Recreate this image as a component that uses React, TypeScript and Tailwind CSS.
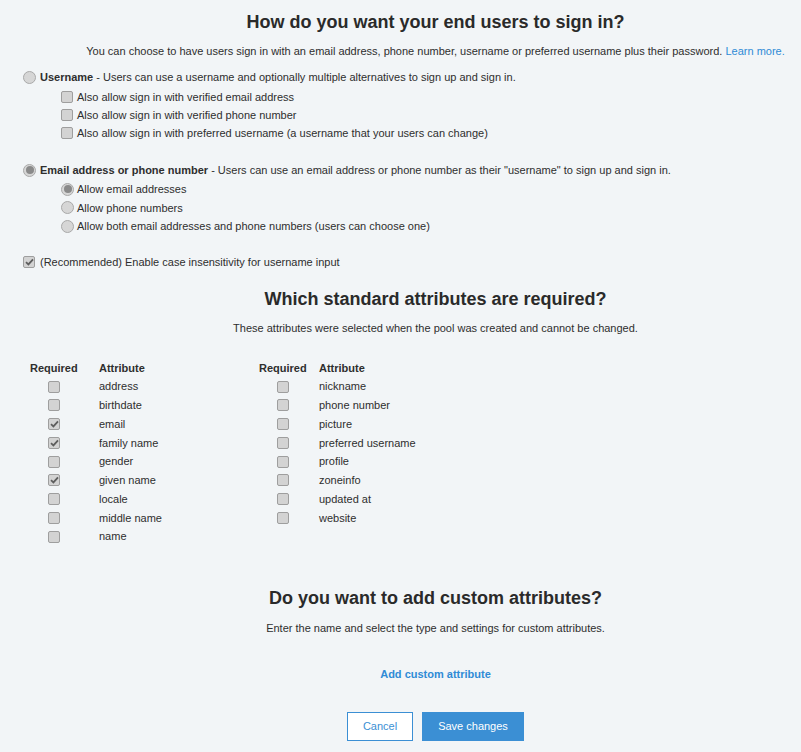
import React from "react"

const Radio = ({ checked = false }: { checked?: boolean }) => (
    <span className="w-[13px] h-[13px] rounded-full border border-[#a9a9a9] bg-[#d6d6d6] flex items-center justify-center shrink-0">
        {checked && <span className="w-[8px] h-[8px] rounded-full bg-[#8a8a8a]" />}
    </span>
)

const Check = ({ checked = false }: { checked?: boolean }) => (
    <span className="w-[12px] h-[12px] rounded-[2px] border border-[#9e9e9e] bg-[#d3d3d3] flex items-center justify-center shrink-0">
        {checked && (
            <svg width="9" height="8" viewBox="0 0 9 8">
                <path d="M1 4.2 L3.4 6.4 L8 1.3" fill="none" stroke="#5e5e5e" strokeWidth="1.8" />
            </svg>
        )}
    </span>
)

const left = [
    ["address", false],
    ["birthdate", false],
    ["email", true],
    ["family name", true],
    ["gender", false],
    ["given name", true],
    ["locale", false],
    ["middle name", false],
    ["name", false],
] as const

const right = [
    "nickname",
    "phone number",
    "picture",
    "preferred username",
    "profile",
    "zoneinfo",
    "updated at",
    "website",
]

const AttrTable = ({ rows, reqW, checkCls }: { rows: readonly (readonly [string, boolean])[]; reqW: string; checkCls: string }) => (
    <div className="flex flex-col">
        <div className="flex h-[18.75px] items-center font-bold">
            <div className={reqW}>Required</div>
            <div className="w-[160px]">Attribute</div>
        </div>
        {rows.map(([name, on]) => (
            <div key={name} className="flex h-[18.75px] items-center">
                <div className={`${reqW} ${checkCls} flex`}>
                    <Check checked={on} />
                </div>
                <div className="w-[160px]">{name}</div>
            </div>
        ))}
    </div>
)

export default function App() {
    return (
        <div className="min-h-[752px] w-[801px] bg-[#f2f5f7] text-[#2e2e2e] text-[11px] overflow-hidden" style={{ fontFamily: '"Liberation Sans", Arial, sans-serif' }}>
            <div className="pt-[10px] pl-[70px] text-center">
                <h1 className="text-[18px] leading-[24px] font-bold text-[#2a2a2a]">How do you want your end users to sign in?</h1>
                <p className="mt-[10px] leading-[14px]">
                    You can choose to have users sign in with an email address, phone number, username or preferred username plus their password.{" "}
                    <span className="text-[#2f8bd6]">Learn more.</span>
                </p>
            </div>

            <div className="pl-[23px]">
                <div className="mt-[10px] h-[18px] flex items-center gap-[4px]">
                    <Radio />
                    <span><b>Username</b> - Users can use a username and optionally multiple alternatives to sign up and sign in.</span>
                </div>
                <div className="mt-[2px] pl-[38px]">
                    {[
                        "Also allow sign in with verified email address",
                        "Also allow sign in with verified phone number",
                        "Also allow sign in with preferred username (a username that your users can change)",
                    ].map((t) => (
                        <div key={t} className="h-[18px] flex items-center gap-[4px]">
                            <Check />
                            <span>{t}</span>
                        </div>
                    ))}
                </div>

                <div className="mt-[19px] h-[18px] flex items-center gap-[4px]">
                    <Radio checked />
                    <span><b>Email address or phone number</b> - Users can use an email address or phone number as their "username" to sign up and sign in.</span>
                </div>
                <div className="mt-[1px] pl-[38px]">
                    {[
                        ["Allow email addresses", true],
                        ["Allow phone numbers", false],
                        ["Allow both email addresses and phone numbers (users can choose one)", false],
                    ].map(([t, on]) => (
                        <div key={t as string} className="h-[18.5px] flex items-center gap-[3px]">
                            <Radio checked={on as boolean} />
                            <span>{t}</span>
                        </div>
                    ))}
                </div>

                <div className="mt-[17.5px] h-[18px] flex items-center gap-[5px]">
                    <Check checked />
                    <span>(Recommended) Enable case insensitivity for username input</span>
                </div>
            </div>

            <div className="pl-[70px] text-center">
                <h2 className="mt-[16px] text-[18px] leading-[24px] font-bold text-[#2a2a2a]">Which standard attributes are required?</h2>
                <p className="mt-[10px] leading-[14px]">These attributes were selected when the pool was created and cannot be changed.</p>
            </div>

            <div className="mt-[23.5px] pl-[30px] flex">
                <AttrTable rows={left} reqW="w-[69px]" checkCls="pl-[18px]" />
                <AttrTable rows={right.map((r) => [r, false] as const)} reqW="w-[60px]" checkCls="pl-[18px]" />
            </div>

            <div className="pl-[70px] text-center">
                <h2 className="mt-[39.5px] text-[18px] leading-[24px] font-bold text-[#2a2a2a]">Do you want to add custom attributes?</h2>
                <p className="mt-[11px] leading-[14px]">Enter the name and select the type and settings for custom attributes.</p>
                <div className="mt-[32px] leading-[14px] font-bold text-[#2f8bd6]">Add custom attribute</div>
                <div className="mt-[31px] flex justify-center gap-[9px]">
                    <button className="w-[66px] h-[29px] bg-white border border-[#3b8fd4] text-[#3b8fd4]">Cancel</button>
                    <button className="w-[102px] h-[29px] bg-[#3b8fd4] text-white">Save changes</button>
                </div>
            </div>
        </div>
    )
}
